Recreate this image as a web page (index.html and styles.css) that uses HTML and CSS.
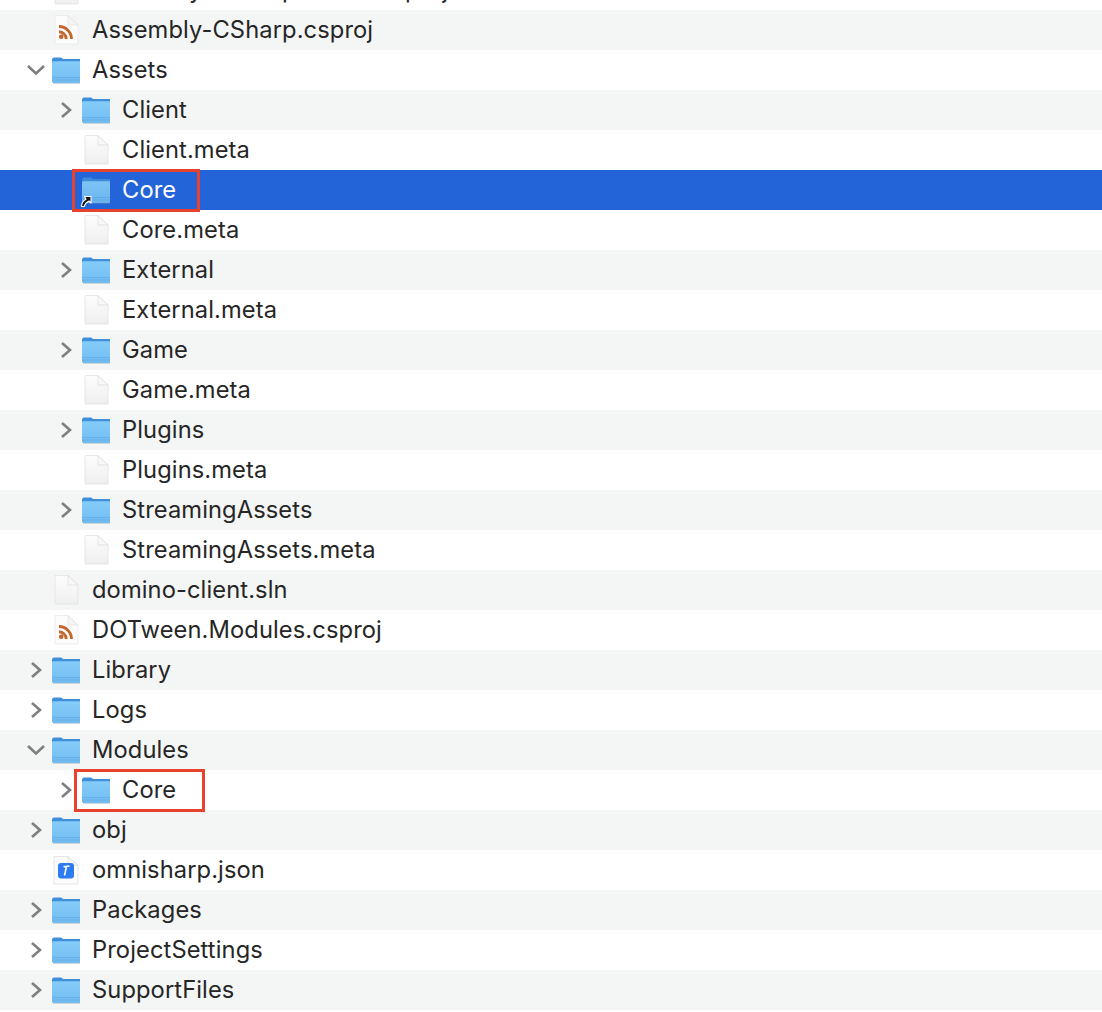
FILE: index.html
```html
<!DOCTYPE html>
<html lang="en">
<head>
<meta charset="utf-8">
<title>Finder</title>
<link rel="stylesheet" href="styles.css">
</head>
<body>
<svg class="defs" width="0" height="0" aria-hidden="true">
  <defs>
    <linearGradient id="fb" x1="0" y1="0" x2="0" y2="1"><stop offset="0" stop-color="#86ccf9"/><stop offset="1" stop-color="#70bcf2"/></linearGradient>
    <linearGradient id="pg" x1="0" y1="0" x2="0" y2="1"><stop offset="0" stop-color="#fdfdfd"/><stop offset="1" stop-color="#efefef"/></linearGradient>
    <symbol id="folder" viewBox="0 0 30 30">
      <path d="M2 5C2 3.300 2.800 2.400 4.300 2.400h6.500c1.300 0 1.700 1.700 3 1.700H29.200C30.300 4.100 31 4.900 31 6v6H2z" fill="#3f8fda"/>
      <path d="M2 7.800C2 6.800 2.700 6.300 3.800 6.300H29.200c1.100 0 1.800.5 1.800 1.500V26.200c0 1.200-.7 1.800-1.800 1.800H3.800C2.700 28 2 27.400 2 26.200z" fill="url(#fb)"/>
      <path d="M2 22.600H31M2 25H31" stroke="#62a9e3" stroke-width=".7"/>
      <path d="M3 28.300H30" stroke="#8f9aa3" stroke-width=".8" opacity=".55"/>
    </symbol>
    <symbol id="page" viewBox="0 0 30 30">
      <path d="M5 .5H18L28 10V29H5z" fill="url(#pg)" stroke="#e2e2e2" stroke-width=".8"/>
      <path d="M18 .5V10H28z" fill="#f8f8f8" stroke="#d8d8d8" stroke-width=".6"/>
    </symbol>
    <symbol id="rss" viewBox="0 0 30 30">
      <path d="M5 .5H18L28 10V29H5z" fill="#fcfcfc" stroke="#e8e8e8" stroke-width=".8"/>
      <path d="M18 .5V10H28z" fill="#f5f5f5" stroke="#dedede" stroke-width=".6"/>
      <circle cx="11.200" cy="21.800" r="2.300" fill="#c4662e"/>
      <path d="M9 16.800A7.200 7.200 0 0 1 16.200 24M9 11.500A12.500 12.500 0 0 1 21.500 24" fill="none" stroke="#c4662e" stroke-width="2.900"/>
    </symbol>
    <symbol id="json" viewBox="0 0 30 30">
      <path d="M4 1.500H18L28 10.500V29H4z" fill="#fcfcfc" stroke="#e0e0e0" stroke-width=".8"/>
      <path d="M18 1.500V10.500H28z" fill="#f5f5f5" stroke="#d8d8d8" stroke-width=".6"/>
      <rect x="8" y="8" width="16" height="15.500" rx="3" fill="#2f7bf0"/>
      <path d="M14.500 20.500L16.500 11.500M13.500 11.800L19.500 11" stroke="#fff" stroke-width="1.600" fill="none"/>
    </symbol>
    <symbol id="closed" viewBox="0 0 16 20">
      <path d="M4 3L12 10L4 17" fill="none" stroke="#7f7f7f" stroke-width="2.600"/>
    </symbol>
    <symbol id="open" viewBox="0 0 20 16">
      <path d="M2 4L10 11.500L18 4" fill="none" stroke="#7f7f7f" stroke-width="2.600"/>
    </symbol>
  </defs>
</svg>
<main class="list">
  <div class="row lvl0"><span class="no-disc"></span><svg class="ic"><use href="#page"/></svg><span class="name">Assembly-CSharp-Editor.csproj</span></div>
  <div class="row lvl0"><span class="no-disc"></span><svg class="ic"><use href="#rss"/></svg><span class="name">Assembly-CSharp.csproj</span></div>
  <div class="row lvl0"><svg class="disc"><use href="#open"/></svg><svg class="ic"><use href="#folder"/></svg><span class="name">Assets</span></div>
  <div class="row lvl1"><svg class="disc"><use href="#closed"/></svg><svg class="ic"><use href="#folder"/></svg><span class="name">Client</span></div>
  <div class="row lvl1"><span class="no-disc"></span><svg class="ic"><use href="#page"/></svg><span class="name">Client.meta</span></div>
  <div class="row lvl1 sel"><span class="no-disc"></span><svg class="ic"><use href="#folder"/></svg><svg class="alias" viewBox="0 0 12 14"><path d="M1.500 12.500C1.500 8.500 3.500 6.500 6 5.200L4.500 2.500H11V9L9 7C6.500 8 5 9.500 4.200 12.500z" fill="#111" stroke="#fff" stroke-width="1.100" stroke-linejoin="round"/></svg><span class="name">Core</span><span class="mark mark-a"></span></div>
  <div class="row lvl1"><span class="no-disc"></span><svg class="ic"><use href="#page"/></svg><span class="name">Core.meta</span></div>
  <div class="row lvl1"><svg class="disc"><use href="#closed"/></svg><svg class="ic"><use href="#folder"/></svg><span class="name">External</span></div>
  <div class="row lvl1"><span class="no-disc"></span><svg class="ic"><use href="#page"/></svg><span class="name">External.meta</span></div>
  <div class="row lvl1"><svg class="disc"><use href="#closed"/></svg><svg class="ic"><use href="#folder"/></svg><span class="name">Game</span></div>
  <div class="row lvl1"><span class="no-disc"></span><svg class="ic"><use href="#page"/></svg><span class="name">Game.meta</span></div>
  <div class="row lvl1"><svg class="disc"><use href="#closed"/></svg><svg class="ic"><use href="#folder"/></svg><span class="name">Plugins</span></div>
  <div class="row lvl1"><span class="no-disc"></span><svg class="ic"><use href="#page"/></svg><span class="name">Plugins.meta</span></div>
  <div class="row lvl1"><svg class="disc"><use href="#closed"/></svg><svg class="ic"><use href="#folder"/></svg><span class="name">StreamingAssets</span></div>
  <div class="row lvl1"><span class="no-disc"></span><svg class="ic"><use href="#page"/></svg><span class="name">StreamingAssets.meta</span></div>
  <div class="row lvl0"><span class="no-disc"></span><svg class="ic"><use href="#page"/></svg><span class="name">domino-client.sln</span></div>
  <div class="row lvl0"><span class="no-disc"></span><svg class="ic"><use href="#rss"/></svg><span class="name">DOTween.Modules.csproj</span></div>
  <div class="row lvl0"><svg class="disc"><use href="#closed"/></svg><svg class="ic"><use href="#folder"/></svg><span class="name">Library</span></div>
  <div class="row lvl0"><svg class="disc"><use href="#closed"/></svg><svg class="ic"><use href="#folder"/></svg><span class="name">Logs</span></div>
  <div class="row lvl0"><svg class="disc"><use href="#open"/></svg><svg class="ic"><use href="#folder"/></svg><span class="name">Modules</span></div>
  <div class="row lvl1"><svg class="disc"><use href="#closed"/></svg><svg class="ic"><use href="#folder"/></svg><span class="name">Core</span><span class="mark mark-b"></span></div>
  <div class="row lvl0"><svg class="disc"><use href="#closed"/></svg><svg class="ic"><use href="#folder"/></svg><span class="name">obj</span></div>
  <div class="row lvl0"><span class="no-disc"></span><svg class="ic"><use href="#json"/></svg><span class="name">omnisharp.json</span></div>
  <div class="row lvl0"><svg class="disc"><use href="#closed"/></svg><svg class="ic"><use href="#folder"/></svg><span class="name">Packages</span></div>
  <div class="row lvl0"><svg class="disc"><use href="#closed"/></svg><svg class="ic"><use href="#folder"/></svg><span class="name">ProjectSettings</span></div>
  <div class="row lvl0"><svg class="disc"><use href="#closed"/></svg><svg class="ic"><use href="#folder"/></svg><span class="name">SupportFiles</span></div>
  <div class="row lvl0"></div>
</main>
</body>
</html>
```
FILE: styles.css
```css
html, body { margin: 0; padding: 0; background: #fff; }
body { width: 1102px; height: 1012px; overflow: hidden; font-family: "Inter", "Liberation Sans", sans-serif; }
.defs { position: absolute; }
.list { display: flex; flex-direction: column; margin-top: -30px; }
.row { position: relative; display: flex; align-items: center; height: 40px; flex: none; color: #262626; font-size: 23.7px; letter-spacing: .1px; background: #fff; }
.row:nth-child(even) { background: #f4f5f5; }
.row.sel { background: #2364d9; color: #fff; }
.lvl0 { padding-left: 26px; }
.lvl1 { padding-left: 56px; }
.disc { width: 20px; height: 20px; flex: none; }
.no-disc { width: 20px; height: 20px; flex: none; }
.ic { width: 30px; height: 30px; flex: none; margin-left: 4px; margin-right: 12px; overflow: visible; }
.sel .ic { opacity: .92; }
.name { white-space: nowrap; padding-bottom: 2px; }
.alias { position: absolute; left: 80px; top: 24px; width: 12px; height: 14px; }
.mark { position: absolute; z-index: 1; border: 3px solid #e8412c; box-sizing: border-box; pointer-events: none; }
.mark-a { left: 72px; top: -1px; width: 128px; height: 43px; }
.mark-b { left: 74px; top: -1px; width: 131px; height: 43px; }
```
